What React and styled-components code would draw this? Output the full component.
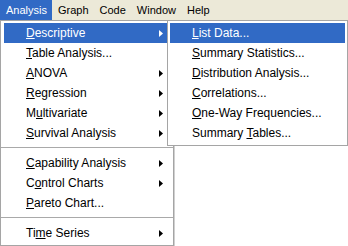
import React from 'react';
import styled, { createGlobalStyle } from 'styled-components';

const GlobalStyle = createGlobalStyle`
  html, body {
    margin: 0;
    padding: 0;
    background: #ffffff;
  }
  body {
    font-family: "Liberation Sans", Arial, sans-serif;
    font-size: 11px;
    color: #000000;
  }
`

const barItems = ['Analysis', 'Graph', 'Code', 'Window', 'Help'];

// label, index of underlined letter, has submenu, highlighted
const mainItems = [
  ['Descriptive', 0, true, true],
  ['Table Analysis...', 0, false],
  ['ANOVA', 0, true],
  ['Regression', 0, true],
  ['Multivariate', 1, true],
  ['Survival Analysis', 0, true],
  '-',
  ['Capability Analysis', 0, true],
  ['Control Charts', 1, true],
  ['Pareto Chart...', 0, false],
  '-',
  ['Time Series', 2, true],
];

const subItems = [
  ['List Data...', 0, false, true],
  ['Summary Statistics...', 0, false],
  ['Distribution Analysis...', 0, false],
  ['Correlations...', 0, false],
  ['One-Way Frequencies...', 0, false],
  ['Summary Tables...', 8, false],
];

function Label({ text, mn }) {
  return (
    <span>
      {text.slice(0, mn)}
      <u>{text[mn]}</u>
      {text.slice(mn + 1)}
    </span>
  )
}

function Arrow() {
  return (
    <ArrowIcon width="4" height="7" viewBox="0 0 4 7">
      <path d="M0 0 L4 3.5 L0 7 Z" fill="currentColor" />
    </ArrowIcon>
  )
}

function MenuList({ items }) {
  return items.map((it, i) => {
    if (it === '-') return <Separator key={i} />;
    const [text, mn, sub, active] = it;
    return (
      <Item key={i} $active={active}>
        <Label text={text} mn={mn} />
        {sub && <Arrow />}
      </Item>
    )
  })
}

export default function App() {
  return (
    <Screen>
      <GlobalStyle />
      <MenuBar>
        {barItems.map((b, i) => (
          <BarItem key={b} $active={i === 0}>{b}</BarItem>
        ))}
      </MenuBar>
      <Dropdown>
        <MenuList items={mainItems} />
        <SubMenu>
          <MenuList items={subItems} />
        </SubMenu>
      </Dropdown>
    </Screen>
  )
}

const Screen = styled.div`
  position: relative;
  width: 348px;
  height: 246px;
  overflow: hidden;
  background: #ffffff;
`

const MenuBar = styled.div`
  display: flex;
  height: 20px;
  background: #ece9d8;
`

const BarItem = styled.div`
  display: flex;
  align-items: center;
  padding: 0 5px 1px 6px;
  background: ${p => p.$active ? '#316ac5' : 'transparent'};
  color: ${p => p.$active ? '#ffffff' : '#000000'};
`

const Dropdown = styled.div`
  position: absolute;
  left: 0;
  top: 20px;
  width: 167px;
  padding: 2px 2px 2px 3px;
  background: #ffffff;
  border: 1px solid #a5a5a5;
  box-shadow: 1px 1px 0 #d0d0d0;
`

const SubMenu = styled.div`
  position: absolute;
  left: 166px;
  top: -1px;
  width: 175px;
  padding: 2px 2px 2px 2px;
  background: #ffffff;
  border: 1px solid #a5a5a5;
`

const Item = styled.div`
  display: flex;
  align-items: center;
  justify-content: space-between;
  height: 20px;
  padding: 0 8px 0 22px;
  font-size: 12px;
  background: ${p => p.$active ? '#316ac5' : 'transparent'};
  color: ${p => p.$active ? '#ffffff' : '#000000'};
  white-space: nowrap;
  u {
    text-decoration-thickness: 1px;
    text-underline-offset: 1px;
  }
`

const ArrowIcon = styled.svg`
  display: block;
  flex: none;
`

const Separator = styled.div`
  height: 1px;
  margin: 4px -2px 5px -3px;
  background: #a9a9a9;
`
